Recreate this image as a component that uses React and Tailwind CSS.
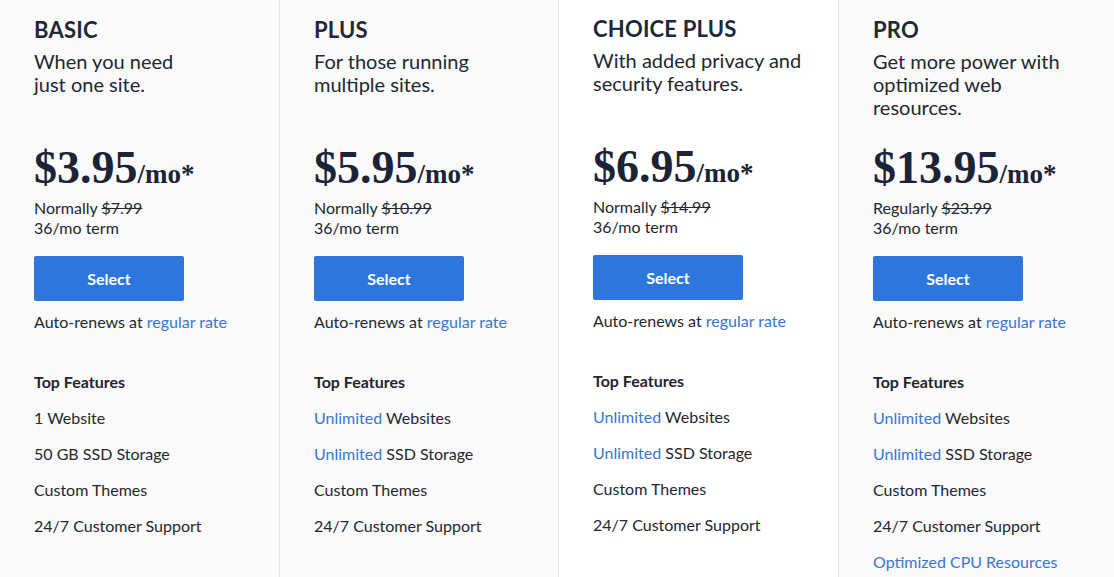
import React from "react";

const plans = [
  {
    name: "BASIC",
    desc: ["When you need", "just one site."],
    price: "$3.95",
    label: "Normally",
    old: "$7.99",
    features: [["", "1 Website"], ["", "50 GB SSD Storage"], ["", "Custom Themes"], ["", "24/7 Customer Support"]],
  },
  {
    name: "PLUS",
    desc: ["For those running", "multiple sites."],
    price: "$5.95",
    label: "Normally",
    old: "$10.99",
    features: [["Unlimited", " Websites"], ["Unlimited", " SSD Storage"], ["", "Custom Themes"], ["", "24/7 Customer Support"]],
  },
  {
    name: "CHOICE PLUS",
    desc: ["With added privacy and", "security features."],
    price: "$6.95",
    label: "Normally",
    old: "$14.99",
    featured: true,
    features: [["Unlimited", " Websites"], ["Unlimited", " SSD Storage"], ["", "Custom Themes"], ["", "24/7 Customer Support"]],
  },
  {
    name: "PRO",
    desc: ["Get more power with", "optimized web", "resources."],
    price: "$13.95",
    label: "Regularly",
    old: "$23.99",
    features: [
      ["Unlimited", " Websites"],
      ["Unlimited", " SSD Storage"],
      ["", "Custom Themes"],
      ["", "24/7 Customer Support"],
      ["Optimized CPU Resources", ""],
    ],
  },
];

const PlanColumn = ({ plan, last }) => {
  return (
    <div
      className={
        "pl-[34px] pr-4 " +
        (plan.featured ? "bg-white pt-[17px] " : "bg-[#fafafa] pt-[18px] ") +
        (last ? "" : "border-r border-[#e4e4e4]")
      }
    >
      <h2 className="text-[22px] leading-[24px] font-bold text-[#1f2838] tracking-[0.2px]">{plan.name}</h2>
      <div className="mt-2 h-[69px] text-[20px] leading-[23px] text-[#23272f]">
        {plan.desc.map((line, i) => (
          <div key={i}>{line}</div>
        ))}
      </div>

      <div className="mt-6 h-[50px] leading-[50px] text-[#1b2436] font-bold" style={{ fontFamily: '"Liberation Serif", serif' }}>
        <span className="text-[46px]">{plan.price}</span>
        <span className="text-[27px]">/mo*</span>
      </div>

      <div className="mt-[5px] text-[16px] leading-[20px] text-[#23272f]">
        <div>
          {plan.label} <span className="line-through">{plan.old}</span>
        </div>
        <div>36/mo term</div>
      </div>

      <button className="mt-[18px] w-[150px] h-[45px] rounded-[2px] bg-[#2f76dc] text-white text-[16px] font-bold">
        Select
      </button>

      <div className="mt-[11px] text-[16px] leading-[20px] text-[#23272f]">
        Auto-renews at <span className="text-[#3776d2]">regular rate</span>
      </div>

      <div className="mt-10 text-[16px] leading-[20px] font-bold text-[#1f2430]">Top Features</div>

      <ul className="mt-4 flex flex-col gap-4 text-[16px] leading-[20px] text-[#23272f]">
        {plan.features.map(([blue, rest], i) => (
          <li key={i}>
            {blue && <span className="text-[#3776d2]">{blue}</span>}
            {rest}
          </li>
        ))}
      </ul>
    </div>
  );
};

const App = () => {
  return (
    <div
      className="w-[1114px] h-[577px] overflow-hidden bg-[#fafafa] grid grid-cols-[280px_279px_280px_1fr]"
      style={{ fontFamily: 'Lato, "Liberation Sans", sans-serif' }}
    >
      {plans.map((plan, i) => (
        <PlanColumn key={plan.name} plan={plan} last={i === plans.length - 1} />
      ))}
    </div>
  );
};

export default App;
